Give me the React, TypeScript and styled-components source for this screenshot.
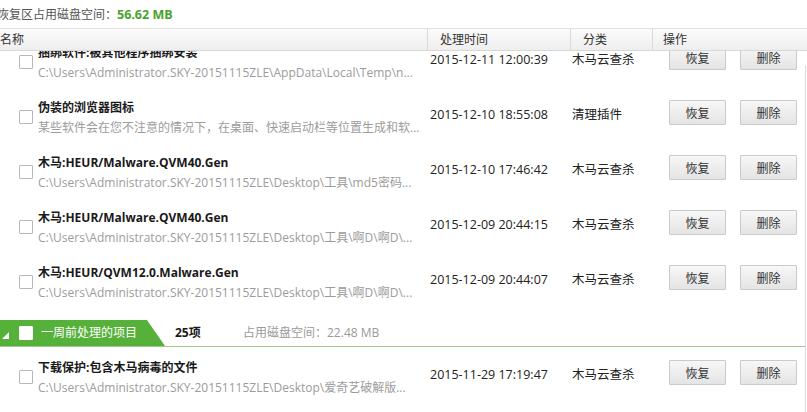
import React from "react";
import styled, { createGlobalStyle } from "styled-components";

const Global = createGlobalStyle`
  html, body { margin: 0; padding: 0; background: #fff; }
  body {
    font-family: "Open Sans", "Noto Sans CJK SC", sans-serif;
    font-size: 12.5px;
    color: #222;
    overflow: hidden;
  }
`;

const Page = styled.div`
  width: 807px;
  height: 412px;
  display: flex;
  flex-direction: column;
  overflow: hidden;
  background: #fff;
`;

const TopBar = styled.div`
  height: 28px;
  display: flex;
  align-items: center;
  margin-left: -3px;
  color: #555;
  font-size: 12px;
  line-height: 28px;
  padding-top: 1px;
  box-sizing: border-box;
`;

const TopSize = styled.span`
  color: #47a32b;
  font-weight: 700;
  font-size: 12.5px;
`;

const Header = styled.div`
  height: 23px;
  box-sizing: border-box;
  border-top: 1px solid #e2e2e2;
  border-bottom: 1px solid #d8d8d8;
  background: linear-gradient(#fbfbfb, #eeeeee);
  display: grid;
  grid-template-columns: 427px 143px 82px 1fr;
`;

const HeadCell = styled.div<{ $pad: number; $sep?: boolean }>`
  padding-left: ${(p) => p.$pad}px;
  border-left: ${(p) => (p.$sep ? "1px solid #d9d9d9" : "none")};
  color: #333;
  font-size: 12px;
  line-height: 21px;
`;

const Body = styled.div`
  flex: 1;
  display: flex;
  min-height: 0;
`;

const Viewport = styled.div`
  flex: 1;
  overflow: hidden;
`;

const Content = styled.div`
  margin-top: -19px;
`;

const Track = styled.div`
  width: 2px;
  display: flex;
  flex-direction: column;
`;

const Thumb = styled.div`
  margin-top: 14px;
  flex: 1;
  border-left: 1px solid #dcdcdc;
`;

const Row = styled.div`
  height: 55px;
  display: grid;
  grid-template-columns: 427px 143px 82px 1fr;
`;

const NameCell = styled.div`
  display: flex;
  align-items: flex-start;
  min-width: 0;
`;

const Check = styled.span<{ $white?: boolean }>`
  flex: none;
  width: 12px;
  height: 12px;
  border: 1px solid ${(p) => (p.$white ? "#fff" : "#b8b8b8")};
  background: #fff;
  border-radius: 1px;
`;

const RowCheck = styled(Check)`
  margin: 23px 0 0 19px;
`;

const NameText = styled.div`
  margin-left: 5px;
  padding-top: 11px;
  min-width: 0;
  flex: 1;
`;

const Title = styled.div`
  font-weight: 700;
  font-size: 12px;
  line-height: 20px;
  color: #1a1a1a;
  white-space: nowrap;
  overflow: hidden;
`;

const Path = styled.div`
  font-size: 12px;
  line-height: 20px;
  color: #9c9c9c;
  white-space: nowrap;
  overflow: hidden;
`;

const TextCell = styled.div<{ $pad: number }>`
  padding: 18px 0 0 ${(p) => p.$pad}px;
  line-height: 20px;
  font-size: 12.5px;
  color: #222;
  white-space: nowrap;
`;

const Actions = styled.div`
  display: flex;
  gap: 14px;
  padding: 13px 0 0 17px;
  align-items: flex-start;
`;

const Btn = styled.button`
  width: 57px;
  height: 25px;
  box-sizing: border-box;
  border: 1px solid #cacaca;
  border-radius: 1px;
  background: linear-gradient(#f7f7f7, #e4e4e4);
  font-family: "Noto Sans CJK SC", sans-serif;
  font-size: 12px;
  color: #333;
  padding: 0;
  line-height: 22px;
`;

const Group = styled.div`
  padding-top: 13px;
  display: flex;
  align-items: stretch;
  border-bottom: 1px solid #9fc78f;
`;

const Tab = styled.div`
  width: 165px;
  height: 26px;
  background: #56b13a;
  clip-path: polygon(0 0, 147px 0, 165px 100%, 0 100%);
  display: flex;
  align-items: center;
  color: #fff;
  font-size: 12px;
`;

const Triangle = styled.span`
  width: 0;
  height: 0;
  margin-left: 2px;
  border-style: solid;
  border-width: 0 0 7px 7px;
  border-color: transparent transparent #fff transparent;
  margin-top: 5px;
`;

const TabCheck = styled(Check)`
  margin-left: 10px;
`;

const TabLabel = styled.span`
  margin-left: 8px;
  line-height: 26px;
`;

const Count = styled.span`
  margin-left: 10px;
  font-weight: 700;
  font-size: 12px;
  line-height: 26px;
  align-self: flex-end;
  color: #1a1a1a;
  width: 68px;
`;

const GroupSize = styled.span`
  font-size: 12px;
  line-height: 26px;
  align-self: flex-end;
  color: #9a9a9a;
`;

type Item = { title: string; path: string; date: string; cat: string };

const items: Item[] = [
  {
    title: "捆绑软件:被其他程序捆绑安装",
    path: "C:\\Users\\Administrator.SKY-20151115ZLE\\AppData\\Local\\Temp\\n...",
    date: "2015-12-11 12:00:39",
    cat: "木马云查杀",
  },
  {
    title: "伪装的浏览器图标",
    path: "某些软件会在您不注意的情况下，在桌面、快速启动栏等位置生成和软...",
    date: "2015-12-10 18:55:08",
    cat: "清理插件",
  },
  {
    title: "木马:HEUR/Malware.QVM40.Gen",
    path: "C:\\Users\\Administrator.SKY-20151115ZLE\\Desktop\\工具\\md5密码...",
    date: "2015-12-10 17:46:42",
    cat: "木马云查杀",
  },
  {
    title: "木马:HEUR/Malware.QVM40.Gen",
    path: "C:\\Users\\Administrator.SKY-20151115ZLE\\Desktop\\工具\\啊D\\啊D\\...",
    date: "2015-12-09 20:44:15",
    cat: "木马云查杀",
  },
  {
    title: "木马:HEUR/QVM12.0.Malware.Gen",
    path: "C:\\Users\\Administrator.SKY-20151115ZLE\\Desktop\\工具\\啊D\\啊D\\...",
    date: "2015-12-09 20:44:07",
    cat: "木马云查杀",
  },
];

const older: Item[] = [
  {
    title: "下载保护:包含木马病毒的文件",
    path: "C:\\Users\\Administrator.SKY-20151115ZLE\\Desktop\\爱奇艺破解版...",
    date: "2015-11-29 17:19:47",
    cat: "木马云查杀",
  },
];

function ItemRow({ it }: { it: Item }) {
  return (
    <Row>
      <NameCell>
        <RowCheck />
        <NameText>
          <Title>{it.title}</Title>
          <Path>{it.path}</Path>
        </NameText>
      </NameCell>
      <TextCell $pad={3}>{it.date}</TextCell>
      <TextCell $pad={2}>{it.cat}</TextCell>
      <Actions>
        <Btn>恢复</Btn>
        <Btn>删除</Btn>
      </Actions>
    </Row>
  );
}

export default function App() {
  return (
    <Page>
      <Global />
      <TopBar>
        恢复区占用磁盘空间：<TopSize>56.62 MB</TopSize>
      </TopBar>
      <Header>
        <HeadCell $pad={0}>名称</HeadCell>
        <HeadCell $pad={12} $sep>处理时间</HeadCell>
        <HeadCell $pad={12} $sep>分类</HeadCell>
        <HeadCell $pad={10} $sep>操作</HeadCell>
      </Header>
      <Body>
        <Viewport>
          <Content>
            {items.map((it, i) => (
              <ItemRow key={i} it={it} />
            ))}
            <Group>
              <Tab>
                <Triangle />
                <TabCheck $white />
                <TabLabel>一周前处理的项目</TabLabel>
              </Tab>
              <Count>25项</Count>
              <GroupSize>占用磁盘空间：22.48 MB</GroupSize>
            </Group>
            {older.map((it, i) => (
              <ItemRow key={i} it={it} />
            ))}
          </Content>
        </Viewport>
        <Track>
          <Thumb />
        </Track>
      </Body>
    </Page>
  );
}
